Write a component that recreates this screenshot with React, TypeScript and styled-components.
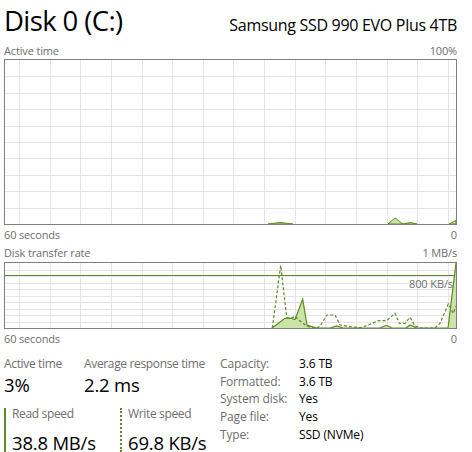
import React from 'react'
import styled, { createGlobalStyle } from 'styled-components'

const GlobalStyle = createGlobalStyle`
  html, body {
    margin: 0;
    padding: 0;
    background: #fff;
  }
  body {
    font-family: "Open Sans", "Noto Sans", sans-serif;
    color: #000;
  }
`

const LINE = '#5e8a22'
const FILL = '#c9e4a6'
const GRID = '#e6e6e6'

const Page = styled.div`
  width: 453px;
  height: 452px;
  padding-left: 4px;
  overflow: hidden;
`

const Header = styled.div`
  display: flex;
  justify-content: space-between;
  align-items: baseline;
  height: 42px;
`

const Title = styled.div`
  font-size: 27.5px;
  line-height: 42px;
  letter-spacing: -0.6px;
`

const Model = styled.div`
  font-size: 16px;
  line-height: 42px;
  letter-spacing: -0.3px;
`

const LabelRow = styled.div<{ $h: number }>`
  display: flex;
  justify-content: space-between;
  align-items: center;
  height: ${p => p.$h}px;
  font-size: 11px;
  letter-spacing: -0.15px;
  color: #6e6e6e;
`

const ChartBox = styled.div<{ $h: number }>`
  position: relative;
  box-sizing: border-box;
  width: 453px;
  height: ${p => p.$h}px;
  border: 1px solid #7f7f7f;
  background: #fff;

  svg {
    display: block;
  }
`

const Overlay = styled.span`
  position: absolute;
  right: 3px;
  top: 14px;
  font-size: 11px;
  line-height: 14px;
  letter-spacing: -0.1px;
  color: #6e6e6e;
`

const Stats = styled.div`
  display: flex;
  padding-top: 8px;
`

const LeftStats = styled.div`
  width: 216px;
  display: flex;
  flex-direction: column;
`

const StatRow = styled.div`
  display: flex;
`

const Stat = styled.div<{ $w: number }>`
  width: ${p => p.$w}px;
`

const StatLabel = styled.div`
  font-size: 12px;
  line-height: 17px;
  color: #6e6e6e;
  letter-spacing: -0.35px;
  white-space: nowrap;
`

const StatValue = styled.div`
  font-size: 18.5px;
  line-height: 26px;
  letter-spacing: -0.2px;
  white-space: nowrap;
`

const Speed = styled.div<{ $w: number; $dotted?: boolean }>`
  width: ${p => p.$w}px;
  box-sizing: border-box;
  margin-top: 10px;
  padding-left: 6px;
  border-left: 2px ${p => (p.$dotted ? 'dotted' : 'solid')} ${LINE};
  height: 44px;

  ${StatLabel} {
    line-height: 12px;
    margin-bottom: 13px;
  }

  ${StatValue} {
    line-height: 19px;
  }
`

const Details = styled.div`
  display: grid;
  grid-template-columns: 79px auto;
  grid-auto-rows: 17.6px;
  align-items: center;
`

const DKey = styled.div`
  font-size: 12px;
  color: #6e6e6e;
  letter-spacing: -0.15px;
`

const DVal = styled.div`
  font-size: 12px;
  color: #000;
  letter-spacing: -0.15px;
`

type Pt = [number, number]

const pts = (list: Pt[], oy: number) => list.map(([x, y]) => `${x - 5},${y - oy}`).join(' ')

const Grid: React.FC<{ h: number }> = ({ h }) => {
  const xs = Array.from({ length: 15 }, (_, i) => Math.round(14 + i * 30.64))
  const ys = Array.from({ length: 9 }, (_, i) => Math.round((h / 10) * (i + 1)) + 0.5)
  return (
    <g stroke={GRID} strokeWidth={1}>
      {xs.map(x => <line key={'x' + x} x1={x + 0.5} x2={x + 0.5} y1={0} y2={h} />)}
      {ys.map(y => <line key={'y' + y} x1={0} x2={451} y1={y} y2={y} />)}
    </g>
  )
}

// active time, y origin 60
const activeBumps: Pt[][] = [
  [[268, 224], [280, 222.5], [293, 224]],
  [[388, 224], [395, 218], [403, 224]],
  [[403, 224], [410, 222.5], [417, 224]],
  [[449, 224], [456, 220.5], [456, 224]],
]

// transfer rate, y origin 263
const readPts: Pt[] = [
  [272, 328], [285, 318.3], [290, 318], [295, 319.5], [302.7, 299.3], [307, 325], [316.7, 328],
  [330, 328], [336.7, 326], [343, 328], [380, 328], [386.7, 325.3], [391.7, 328],
  [406, 328], [410, 325], [416.7, 328], [448, 328], [456, 263],
]

const writePts: Pt[] = [
  [272.3, 328], [280.7, 265.5], [286.7, 317.3], [290, 318.7], [295, 316.3], [298.3, 319.7],
  [305, 324.7], [310, 327.3], [316.7, 328], [320, 326.3], [327, 315], [335, 315], [340, 325],
  [350, 326.7], [360, 327.7], [368.3, 325], [378.3, 320.7], [386.7, 320.7], [395, 313.3],
  [399.3, 323.3], [405, 323.3], [410, 317.3], [415, 326], [421.7, 328], [435, 328],
  [440, 323.3], [448.3, 304], [453.3, 313.3], [456, 306],
]

const ActiveChart: React.FC = () => (
  <ChartBox $h={166}>
    <svg width={451} height={164}>
      <Grid h={164} />
      {activeBumps.map((b, i) => (
        <polygon key={i} points={pts(b, 60)} fill={FILL} stroke={LINE} strokeWidth={1} />
      ))}
    </svg>
  </ChartBox>
)

const TransferChart: React.FC = () => (
  <ChartBox $h={67}>
    <svg width={451} height={65}>
      <Grid h={65} />
      <line x1={0} x2={451} y1={12.5} y2={12.5} stroke={LINE} strokeWidth={1.2} />
      <polygon points={pts(readPts, 263) + ' 451,65 267,65'} fill={FILL} stroke="none" />
      <polyline points={pts(readPts, 263)} fill="none" stroke={LINE} strokeWidth={1.2} />
      <polyline points={pts(writePts, 263)} fill="none" stroke={LINE} strokeWidth={1.2} strokeDasharray="3 2" />
    </svg>
    <Overlay>800 KB/s</Overlay>
  </ChartBox>
)

export default function App() {
  return (
    <Page>
      <GlobalStyle />
      <Header>
        <Title>Disk 0 (C:)</Title>
        <Model>Samsung SSD 990 EVO Plus 4TB</Model>
      </Header>

      <LabelRow $h={17}>
        <span>Active time</span>
        <span>100%</span>
      </LabelRow>
      <ActiveChart />
      <LabelRow $h={18}>
        <span>60 seconds</span>
        <span>0</span>
      </LabelRow>

      <LabelRow $h={19}>
        <span>Disk transfer rate</span>
        <span>1 MB/s</span>
      </LabelRow>
      <TransferChart />
      <LabelRow $h={18}>
        <span>60 seconds</span>
        <span>0</span>
      </LabelRow>

      <Stats>
        <LeftStats>
          <StatRow>
            <Stat $w={80}>
              <StatLabel>Active time</StatLabel>
              <StatValue>3%</StatValue>
            </Stat>
            <Stat $w={136}>
              <StatLabel>Average response time</StatLabel>
              <StatValue>2.2 ms</StatValue>
            </Stat>
          </StatRow>
          <StatRow>
            <Speed $w={116}>
              <StatLabel>Read speed</StatLabel>
              <StatValue>38.8 MB/s</StatValue>
            </Speed>
            <Speed $w={100} $dotted>
              <StatLabel>Write speed</StatLabel>
              <StatValue>69.8 KB/s</StatValue>
            </Speed>
          </StatRow>
        </LeftStats>
        <Details>
          <DKey>Capacity:</DKey>
          <DVal>3.6 TB</DVal>
          <DKey>Formatted:</DKey>
          <DVal>3.6 TB</DVal>
          <DKey>System disk:</DKey>
          <DVal>Yes</DVal>
          <DKey>Page file:</DKey>
          <DVal>Yes</DVal>
          <DKey>Type:</DKey>
          <DVal>SSD (NVMe)</DVal>
        </Details>
      </Stats>
    </Page>
  )
}
